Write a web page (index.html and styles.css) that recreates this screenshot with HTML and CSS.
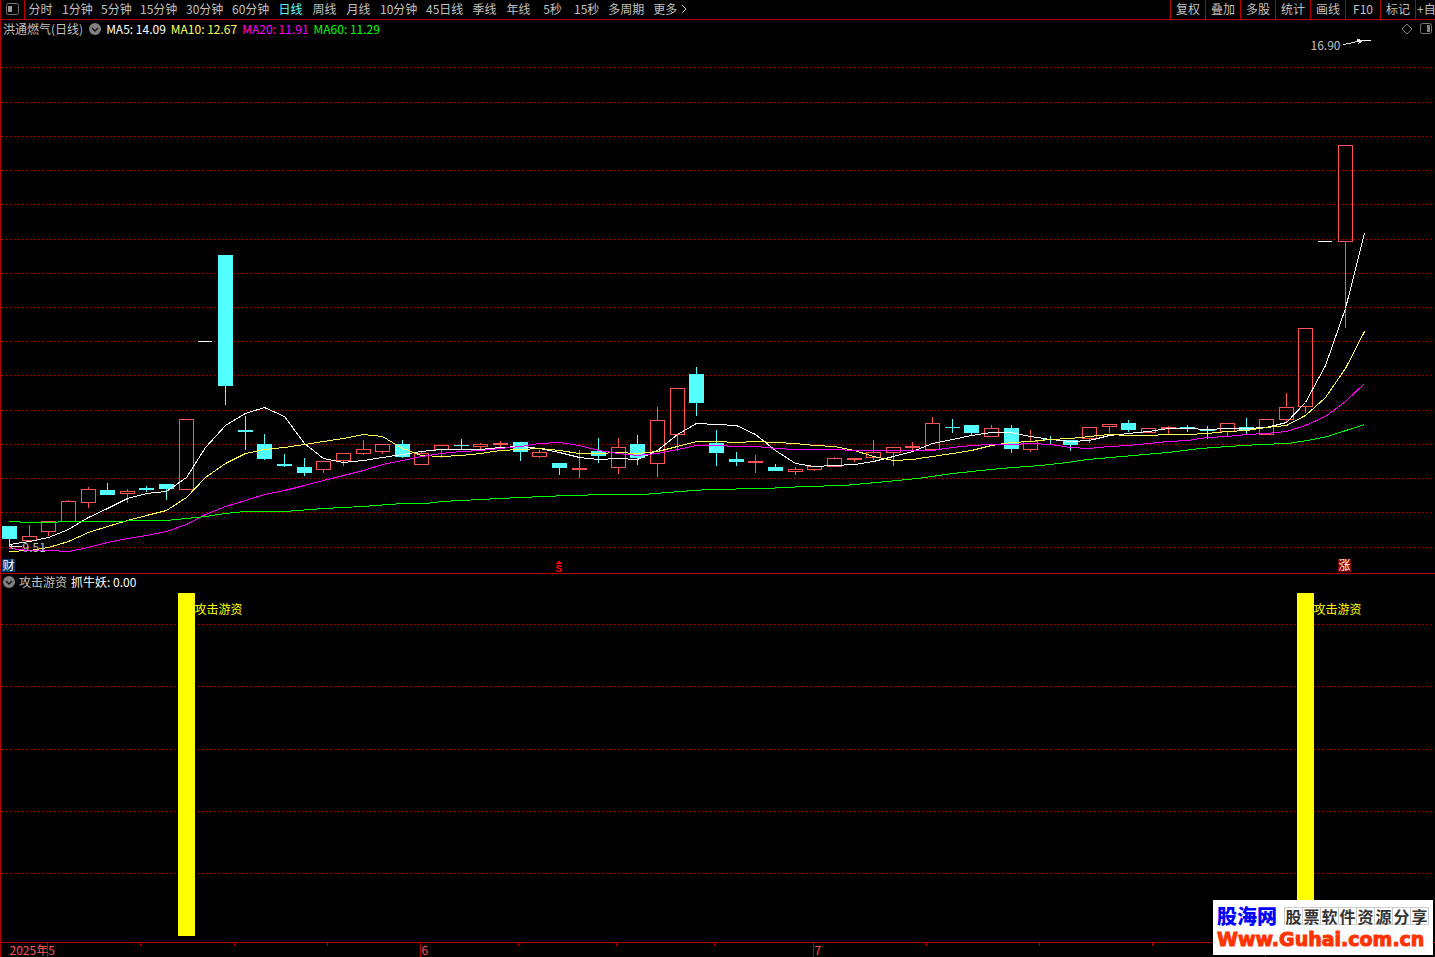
FILE: index.html
```html
<!DOCTYPE html>
<html lang="zh-CN">
<head>
    <meta charset="UTF-8">
    <meta name="viewport" content="width=device-width, initial-scale=1.0">
    <title>洪通燃气(日线)</title>
    <link rel="stylesheet" href="styles.css">
</head>
<body>
    <header class="toolbar">
        <button class="panel-toggle" aria-label="侧栏">
            <svg width="13" height="12" viewBox="0 0 13 12">
                <rect x="0.5" y="0.5" width="12" height="11" rx="2" fill="none" stroke="#777"/>
                <rect x="2" y="3" width="4" height="6" fill="#999"/>
            </svg>
        </button>
        <nav class="periods">
            <button>分时</button>
            <button class="short">1分钟</button>
            <button class="short">5分钟</button>
            <button class="long">15分钟</button>
            <button class="long">30分钟</button>
            <button class="long">60分钟</button>
            <button class="active">日线</button>
            <button>周线</button>
            <button>月线</button>
            <button class="long">10分钟</button>
            <button class="long">45日线</button>
            <button>季线</button>
            <button>年线</button>
            <button>5秒</button>
            <button>15秒</button>
            <button>多周期</button>
            <button class="more">更多
                <svg width="6" height="10" viewBox="0 0 6 10"><path d="M1 1l4 4-4 4" fill="none" stroke="#c0c0c0"/></svg>
            </button>
        </nav>
        <div class="tools">
            <button>复权</button>
            <button>叠加</button>
            <button>多股</button>
            <button>统计</button>
            <button>画线</button>
            <button>F10</button>
            <button>标记</button>
            <button class="cut">+自</button>
        </div>
    </header>

    <main class="charts">
        <section class="pane pane-main">
            <div class="pane-head">
                <span class="stock">洪通燃气(日线)</span>
                <button class="round" aria-label="指标">
                    <svg width="12" height="12" viewBox="0 0 12 12"><circle cx="6" cy="6" r="6" fill="#808080"/><path d="M3 5l3 3 3-3" fill="none" stroke="#111" stroke-width="1.4"/></svg>
                </button>
                <span class="ma5">MA5: 14.09</span>
                <span class="ma10">MA10: 12.67</span>
                <span class="ma20">MA20: 11.91</span>
                <span class="ma60">MA60: 11.29</span>
                <div class="head-icons">
                    <svg width="12" height="12" viewBox="0 0 12 12"><path d="M6 1l5 5-5 5-5-5z" fill="none" stroke="#808080"/></svg>
                    <svg width="12" height="12" viewBox="0 0 12 12"><rect x="0.5" y="0.5" width="11" height="10" rx="2" fill="none" stroke="#777"/><rect x="7" y="2" width="3" height="7" fill="#808080"/></svg>
                </div>
            </div>
            <svg class="plot" id="kline"></svg>
        </section>

        <section class="pane pane-sub">
            <div class="pane-head">
                <button class="round" aria-label="指标">
                    <svg width="12" height="12" viewBox="0 0 12 12"><circle cx="6" cy="6" r="6" fill="#808080"/><path d="M3 5l3 3 3-3" fill="none" stroke="#111" stroke-width="1.4"/></svg>
                </button>
                <span>攻击游资</span>
                <span class="value">抓牛妖: 0.00</span>
            </div>
            <svg class="plot" id="signal"></svg>
        </section>

        <svg class="axis" id="axis"></svg>
    </main>

    <aside class="watermark">
        <div class="wm-top">
            <strong>股海网</strong>
            <span class="wm-slogan"><i>股</i><i>票</i><i>软</i><i>件</i><i>资</i><i>源</i><i>分</i><i>享</i></span>
        </div>
        <div class="wm-url">Www.Guhai.com.cn</div>
    </aside>

    <script src="chart.js"></script>
</body>
</html>
```
FILE: styles.css
```css
* {
    box-sizing: border-box;
}
body {
    margin: 0;
    height: 100vh;
    display: flex;
    flex-direction: column;
    overflow: hidden;
    background: #000;
    color: #c0c0c0;
    font-family: "Noto Sans CJK SC", sans-serif;
    font-size: 12px;
    line-height: 18px;
}
button {
    padding: 0;
    border: none;
    background: none;
    color: inherit;
    font: inherit;
    white-space: nowrap;
    cursor: pointer;
}
svg {
    display: block;
}

/* top bar */
.toolbar {
    display: flex;
    height: 20px;
    border-left: 1px solid #b80000;
    border-bottom: 1px solid #b80000;
}
.toolbar button {
    padding-bottom: 2px;
    line-height: 17px;
}
.toolbar .panel-toggle {
    width: 24px;
    flex: none;
    padding-left: 5px;
    border-right: 1px solid #b80000;
}
.periods {
    display: flex;
    gap: 9px;
    padding-left: 3px;
}
.periods button {
    min-width: 25px;
}
.periods .short {
    width: 30px;
}
.periods .long {
    width: 37px;
}
.periods .active {
    color: #54ffff;
}
.periods .more {
    display: flex;
    align-items: center;
    gap: 4px;
}
.tools {
    display: flex;
    margin-left: auto;
}
.tools button {
    width: 35px;
    border-left: 1px solid #b80000;
}
.tools .cut {
    width: 20px;
    padding-left: 1px;
    text-align: left;
}

/* chart panes */
.charts {
    flex: 1;
    display: flex;
    flex-direction: column;
    min-height: 0;
    border-left: 1px solid #b80000;
}
.pane {
    display: flex;
    flex-direction: column;
    min-height: 0;
    border-bottom: 1px solid #b80000;
}
.pane-main {
    flex: 554 0 0;
}
.pane-sub {
    flex: 369 0 0;
}
.pane-head {
    display: flex;
    align-items: center;
    gap: 5px;
    height: 18px;
    padding: 0 3px 0 2px;
}
.pane-sub .pane-head {
    gap: 4px;
    height: 16px;
}
.pane-head .value,
.ma5 {
    color: #fff;
}
.stock {
    padding-right: 1px;
}
.ma10 {
    color: #ffff54;
}
.ma20 {
    color: #ff00ff;
}
.ma60 {
    color: #00ff00;
}
.head-icons {
    display: flex;
    gap: 7px;
    margin-left: auto;
}
.plot {
    flex: 1;
    width: 100%;
    min-height: 0;
    overflow: visible;
    shape-rendering: crispEdges;
}
.axis {
    width: 100%;
    height: 14px;
    overflow: visible;
    shape-rendering: crispEdges;
}

/* drawn parts */
.grid {
    stroke: #c80000;
    stroke-linecap: square;
    stroke-dasharray: 0 4;
}
.tick {
    stroke: #b80000;
}
.up {
    fill: none;
    stroke: #ff5454;
    stroke-linecap: square;
}
.down {
    fill: #54ffff;
    stroke: #54ffff;
    stroke-linecap: square;
}
.flat {
    stroke: #fff;
    stroke-linecap: square;
}
.line {
    fill: none;
}
.line-ma5 {
    stroke: #fff;
}
.line-ma10 {
    stroke: #ffff54;
}
.line-ma20 {
    stroke: #ff00ff;
}
.line-ma60 {
    stroke: #00ff00;
}
.arrow {
    fill: none;
    stroke: #e0e0e0;
}
.note {
    fill: #c0c0c0;
}
.badge-cai {
    fill: #003870;
    stroke: #003870;
}
.badge-zhang {
    fill: #800000;
    stroke: #800000;
}
.badge-text {
    fill: #fff;
}
.dollar {
    fill: #ff0000;
    font-family: "Liberation Mono", monospace;
    font-size: 11px;
    font-weight: bold;
}
.signal-bar {
    fill: #ffff00;
    stroke: #ffff00;
}
.signal-text {
    fill: #ffff00;
}
.axis-text {
    fill: #ff5454;
}

/* site mark */
.watermark {
    position: fixed;
    right: 2px;
    bottom: 2px;
    width: 220px;
    height: 55px;
    padding: 4px 4px 0;
    background: #fff;
}
.wm-top {
    display: flex;
    align-items: center;
    gap: 7px;
    height: 24px;
}
.wm-top strong {
    color: #0000ff;
    font-size: 20px;
    font-weight: 900;
}
.wm-slogan {
    display: flex;
    border-left: 1px solid #ccc;
}
.wm-slogan i {
    width: 18px;
    height: 18px;
    border: 1px solid #ccc;
    border-left: none;
    color: #333;
    font-size: 16px;
    font-style: normal;
    font-weight: bold;
    line-height: 16px;
    text-align: center;
}
.wm-url {
    color: #ff3300;
    font-family: "DejaVu Sans", sans-serif;
    font-size: 19px;
    font-weight: bold;
    line-height: 22px;
    -webkit-text-stroke: 1px #ff3300;
}
```
FILE: chart.js
```js
const NS = 'http://www.w3.org/2000/svg';
const STEP = 19.64;

// [type, body top, body bottom, high, low]
const candles = [
    ['d', 526, 539, 526, 547], ['u', 536, 541, 525, 541], ['u', 521, 532, 521, 536],
    ['u', 501, 522, 500, 522], ['u', 489, 503, 487, 508], ['d', 490, 495, 483, 495],
    ['u', 491, 494, 489, 503], ['d', 488, 490, 486, 492], ['d', 484, 489, 484, 500],
    ['u', 419, 490, 419, 490], ['f', 341, 342, 341, 342], ['d', 255, 386, 255, 405],
    ['d', 430, 432, 416, 450], ['d', 444, 459, 434, 460], ['d', 464, 466, 454, 467],
    ['d', 467, 473, 458, 476], ['u', 461, 470, 461, 473], ['u', 453, 461, 453, 466],
    ['u', 449, 454, 440, 455], ['u', 444, 452, 444, 454], ['d', 444, 457, 440, 458],
    ['u', 453, 465, 452, 465], ['u', 445, 450, 445, 458], ['d', 445, 446, 439, 449],
    ['u', 444, 447, 443, 449], ['u', 443, 445, 441, 447], ['d', 442, 452, 442, 461],
    ['u', 452, 457, 450, 458], ['d', 463, 468, 463, 475], ['u', 468, 470, 450, 478],
    ['d', 451, 456, 438, 463], ['u', 447, 468, 438, 474], ['d', 444, 458, 435, 465],
    ['u', 420, 464, 407, 477], ['u', 388, 435, 388, 451], ['d', 374, 403, 367, 416],
    ['d', 443, 453, 430, 466], ['d', 459, 462, 452, 466], ['u', 461, 463, 455, 473],
    ['d', 467, 471, 464, 471], ['u', 469, 472, 467, 475], ['u', 466, 470, 466, 471],
    ['u', 458, 467, 457, 467], ['u', 458, 460, 458, 462], ['u', 452, 458, 440, 460],
    ['u', 447, 453, 447, 466], ['u', 446, 448, 442, 450], ['u', 423, 450, 417, 450],
    ['d', 427, 428, 419, 433], ['d', 425, 433, 425, 435], ['u', 428, 437, 425, 437],
    ['d', 428, 449, 425, 453], ['u', 441, 450, 430, 452], ['d', 439, 440, 436, 444],
    ['d', 440, 445, 440, 451], ['u', 427, 439, 427, 443], ['u', 424, 427, 424, 433],
    ['d', 423, 430, 420, 432], ['u', 428, 433, 428, 433], ['u', 427, 429, 426, 434],
    ['d', 427, 429, 425, 432], ['d', 430, 431, 426, 439], ['u', 423, 432, 423, 436],
    ['d', 427, 430, 418, 434], ['u', 419, 435, 419, 435], ['u', 407, 420, 393, 422],
    ['u', 328, 407, 328, 413], ['f', 241, 242, 241, 242], ['u', 145, 242, 145, 328],
    ['f', 40, 41, 40, 41]
];

const ma5 = [544, 541, 537, 529, 517, 508, 498, 493, 491, 477, 447, 425, 413, 407, 416, 443, 458, 462,
    460, 457, 454, 451, 449, 449, 449, 447, 446, 448, 452, 457, 459, 458, 459, 450, 434, 423, 424, 425,
    434, 450, 463, 466, 465, 464, 461, 456, 451, 443, 439, 435, 432, 432, 436, 439, 441, 440, 435, 433,
    431, 428, 428, 429, 428, 428, 427, 422, 402, 365, 308, 233];
const ma10 = [551, 550, 547, 541, 532, 526, 520, 515, 510, 497, 477, 463, 453, 449, 447, 444, 441, 438,
    434, 436, 448, 455, 456, 455, 453, 450, 449, 448, 450, 453, 453, 452, 453, 451, 446, 441, 441, 442,
    441, 442, 443, 445, 446, 450, 456, 460, 459, 456, 453, 450, 445, 442, 441, 439, 438, 436, 434, 435,
    435, 434, 434, 433, 431, 430, 427, 425, 415, 397, 368, 331];
const ma20 = [548, 550, 550, 551, 547, 542, 538, 535, 531, 524, 514, 506, 500, 494, 490, 485, 480, 475,
    470, 464, 460, 456, 453, 451, 450, 448, 446, 443, 442, 445, 450, 453, 455, 453, 449, 445, 445, 446,
    446, 448, 449, 449, 449, 450, 450, 450, 450, 450, 447, 445, 444, 444, 443, 444, 447, 448, 446, 445,
    443, 441, 440, 437, 436, 434, 433, 431, 425, 416, 401, 383];
// long average: [x, y]
const ma60 = [[9, 521], [29, 522], [87, 521], [166, 520], [186, 518], [205, 516], [225, 513], [245, 511],
    [284, 511], [323, 508], [362, 506], [402, 503], [426, 503], [441, 501], [480, 499], [520, 497],
    [568, 495], [608, 494], [642, 494], [667, 492], [707, 489], [765, 488], [805, 486], [843, 485],
    [887, 481], [917, 478], [952, 473], [1000, 468], [1040, 465], [1067, 462], [1087, 459], [1133, 455],
    [1167, 452], [1200, 448], [1227, 446], [1260, 444], [1287, 443], [1307, 440], [1327, 436], [1364, 424]];

function add(parent, tag, attrs, text) {
    const el = document.createElementNS(NS, tag);
    for (const key in attrs) el.setAttribute(key, attrs[key]);
    if (text) el.textContent = text;
    parent.appendChild(el);
    return el;
}

// group whose origin sits on the centre of the screen pixel
function layer(id, top) {
    return add(document.getElementById(id), 'g', { transform: `translate(-0.5 ${0.5 - top})` });
}

function grid(g, rows) {
    rows.forEach(y => add(g, 'line', { class: 'grid', x1: 2, x2: '99.8%', y1: y, y2: y }));
}

function line(g, points, name) {
    add(g, 'polyline', { class: 'line line-' + name, points: points.join(' ') });
}

function byIndex(values) {
    return values.map((y, i) => [Math.round(9 + i * STEP), y]);
}

function drawKline() {
    const g = layer('kline', 38);
    grid(g, [67, 102, 136, 170, 204, 239, 273, 307, 341, 375, 410, 444, 478, 512, 547]);

    candles.forEach(([type, top, bottom, high, low], i) => {
        const x = Math.round(9 + i * STEP);
        if (type === 'f') {
            add(g, 'line', { class: 'flat', x1: x - 7, x2: x + 6, y1: top, y2: top });
            return;
        }
        const cls = type === 'u' ? 'up' : 'down';
        if (high < top) add(g, 'line', { class: cls, x1: x, x2: x, y1: high, y2: top });
        if (low > bottom) add(g, 'line', { class: cls, x1: x, x2: x, y1: bottom - 1, y2: low - 1 });
        if (bottom - top === 1) {
            add(g, 'line', { class: cls, x1: x - 7, x2: x + 7, y1: top, y2: top });
        } else {
            add(g, 'rect', { class: cls, x: x - 7, y: top, width: 14, height: bottom - 1 - top });
        }
    });

    line(g, byIndex(ma5), 'ma5');
    line(g, byIndex(ma10), 'ma10');
    line(g, byIndex(ma20), 'ma20');
    line(g, ma60, 'ma60');

    // lowest and highest price
    add(g, 'path', { class: 'arrow', d: 'M21 546H10M13 543l-3 3 3 3' });
    add(g, 'text', { class: 'note', x: 22, y: 551 }, '9.51');
    add(g, 'text', { class: 'note', x: 1310, y: 49 }, '16.90');
    add(g, 'path', { class: 'arrow', d: 'M1343 44L1362 40M1357 39l5 1-4 3' });

    // event badges
    add(g, 'rect', { class: 'badge-cai', x: 2, y: 559, width: 12, height: 12 });
    add(g, 'text', { class: 'badge-text', x: 2, y: 569 }, '财');
    add(g, 'rect', { class: 'badge-zhang', x: 1338, y: 559, width: 12, height: 12 });
    add(g, 'text', { class: 'badge-text', x: 1338, y: 569 }, '涨');
    add(g, 'path', { class: 'dollar', d: 'M555 563l3-3 3 3z' });
    add(g, 'text', { class: 'dollar', x: 555, y: 571 }, 'S');
}

function drawSignal() {
    const g = layer('signal', 590);
    grid(g, [624, 686, 749, 811, 873]);
    [178, 1297].forEach(x => {
        add(g, 'rect', { class: 'signal-bar', x: x, y: 593, width: 16, height: 342 });
        add(g, 'text', { class: 'signal-text', x: x + 16, y: 613 }, '攻击游资');
    });
}

function drawAxis() {
    const g = layer('axis', 943);
    [140, 234, 327, 518, 616, 714, 926, 1039, 1152].forEach(x => {
        add(g, 'line', { class: 'tick', x1: x, x2: x, y1: 942, y2: 945 });
    });
    [47, 420, 813, 1265].forEach(x => {
        add(g, 'line', { class: 'tick', x1: x, x2: x, y1: 942, y2: 957 });
    });
    add(g, 'text', { class: 'axis-text', x: 9, y: 954 }, '2025年5');
    add(g, 'text', { class: 'axis-text', x: 421, y: 954 }, '6');
    add(g, 'text', { class: 'axis-text', x: 814, y: 954 }, '7');
}

drawKline();
drawSignal();
drawAxis();
```
